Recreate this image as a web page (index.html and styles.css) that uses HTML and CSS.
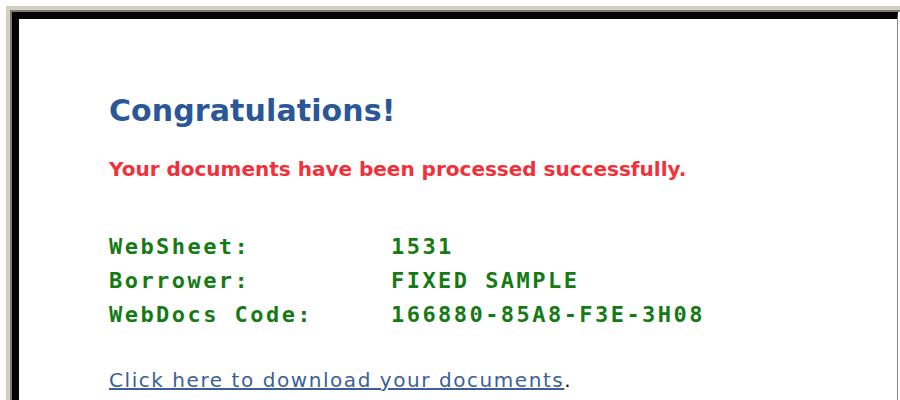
FILE: index.html
```html
<!DOCTYPE html>
<html>
<head>
<meta charset="utf-8">
<title>Congratulations</title>
<link rel="stylesheet" href="styles.css">
</head>
<body>
<div class="frame">
  <div class="frame-mid">
    <div class="panel">
      <h1 class="title">Congratulations!</h1>
      <p class="notice">Your documents have been processed successfully.</p>
      <dl class="details">
        <dt>WebSheet:</dt><dd>1531</dd>
        <dt>Borrower:</dt><dd>FIXED SAMPLE</dd>
        <dt>WebDocs Code:</dt><dd>166880-85A8-F3E-3H08</dd>
      </dl>
      <p class="download"><a href="#">Click here to download your documents</a>.</p>
    </div>
  </div>
</div>
</body>
</html>
```
FILE: styles.css
```css
html, body {
  margin: 0;
  padding: 0;
  background: #ffffff;
  overflow: hidden;
}

.frame {
  margin: 6px 0 0 6px;
  border-top: 4px solid #d2cfc3;
  border-left: 4px solid #d2cfc3;
}

.frame-mid {
  border-top: 2px solid #7d7c76;
  border-left: 2px solid #7d7c76;
}

.panel {
  width: 886px;
  height: 388px;
  box-sizing: border-box;
  border-top: 7px solid #050505;
  border-left: 7px solid #050505;
  border-right: 1px solid #8a8a8a;
  background: #ffffff;
  padding: 74px 0 0 90px;
}

.title {
  margin: 0;
  font-family: "DejaVu Sans", Verdana, sans-serif;
  font-weight: bold;
  font-size: 30px;
  line-height: 36px;
  letter-spacing: 0.1px;
  color: #2a5797;
}

.notice {
  margin: 28px 0 0 0;
  font-family: "DejaVu Sans", Verdana, sans-serif;
  font-weight: bold;
  font-size: 20px;
  line-height: 24px;
  color: #f2303a;
}

.details {
  margin: 54px 0 0 0;
  display: grid;
  grid-template-columns: 282px auto;
  row-gap: 10px;
  font-family: "DejaVu Sans Mono", monospace;
  font-weight: bold;
  font-size: 22px;
  line-height: 24px;
  letter-spacing: 2.45px;
  color: #157a15;
}

.details dt,
.details dd {
  margin: 0;
}

.download {
  margin: 41px 0 0 0;
  font-family: "DejaVu Sans", Verdana, sans-serif;
  font-size: 20px;
  line-height: 24px;
  letter-spacing: 1.56px;
  color: #111111;
}

.download a {
  color: #3b5f97;
  text-decoration: underline;
}
```
